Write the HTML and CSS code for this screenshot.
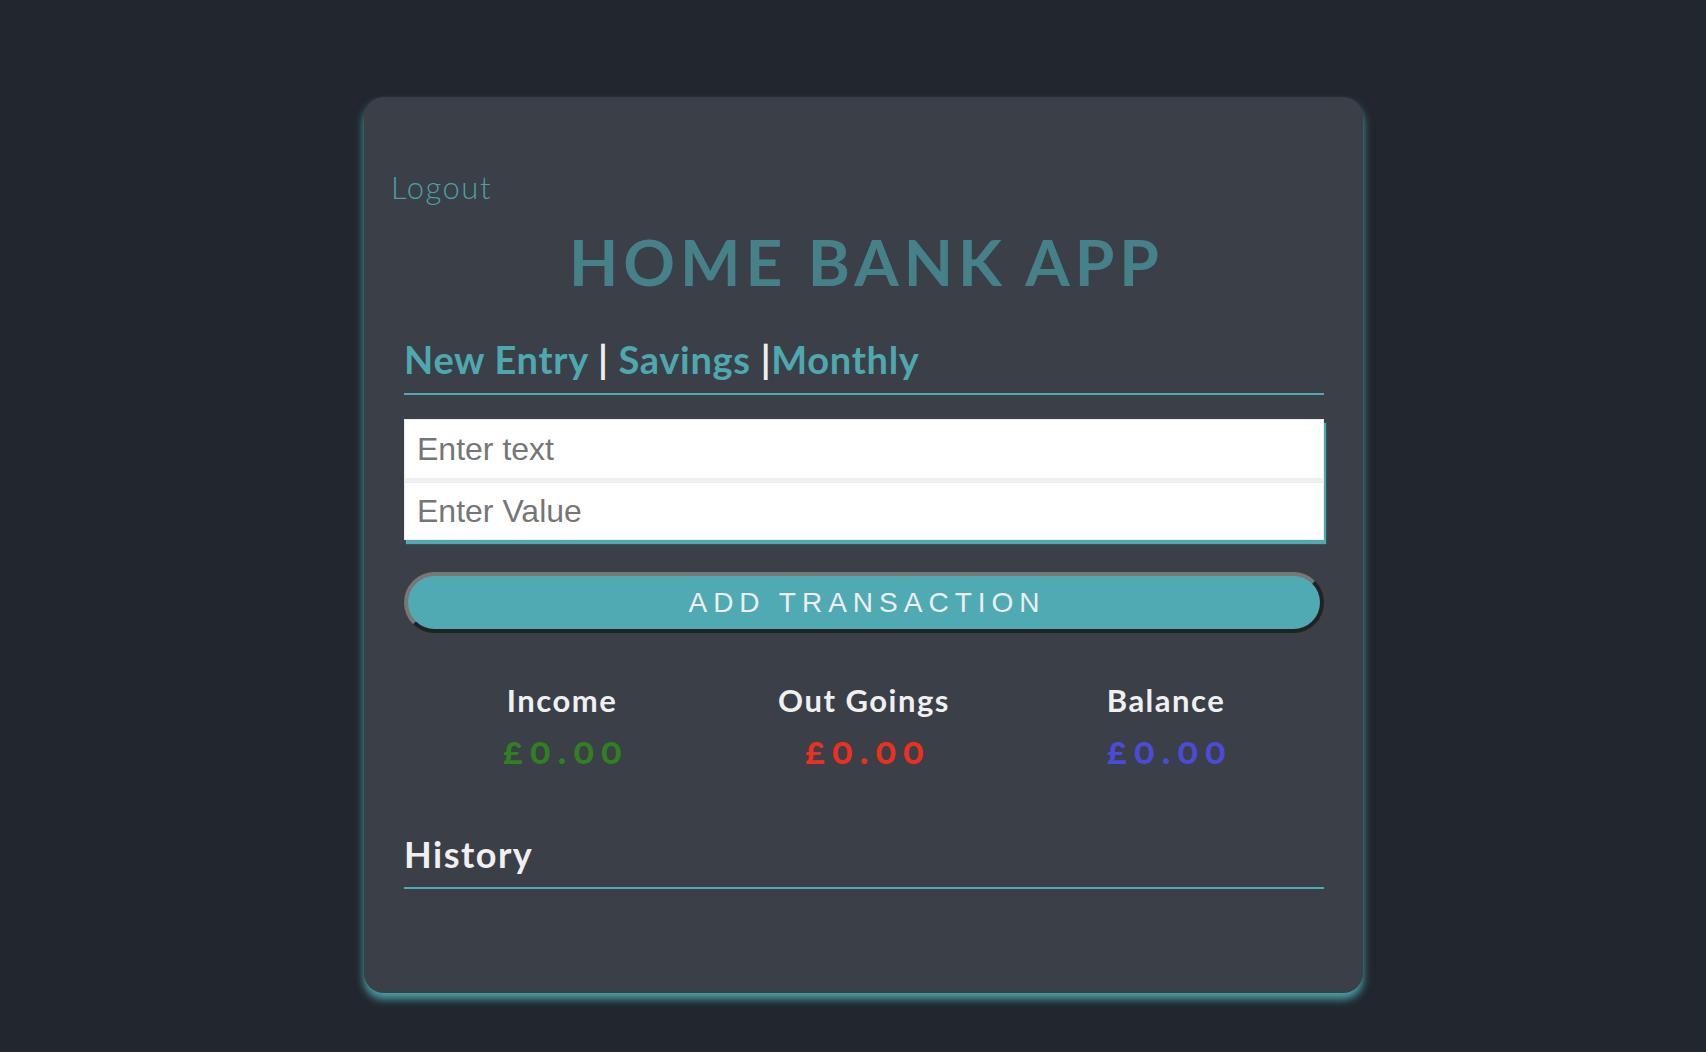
FILE: index.html
```html
<!DOCTYPE html>
<html lang="en">
<head>
<meta charset="utf-8">
<title>Home Bank App</title>
<link rel="stylesheet" href="styles.css">
</head>
<body>
<div class="page">
  <div class="card">
    <a class="logout" href="#">Logout</a>
    <h1 class="title">HOME BANK APP</h1>
    <div class="main">
      <nav class="tabs"><a href="#" class="tab">New Entry</a><span class="sep"> | </span><a href="#" class="tab">Savings</a><span class="sep"> |</span><a href="#" class="tab">Monthly</a></nav>
      <div class="fields">
        <input class="field field-first" type="text" placeholder="Enter text">
        <input class="field" type="text" placeholder="Enter Value">
      </div>
      <button class="add-btn" type="button">ADD TRANSACTION</button>
      <div class="stats">
        <div class="stat">
          <div class="stat-label">Income</div>
          <div class="stat-value income">£0.00</div>
        </div>
        <div class="stat">
          <div class="stat-label">Out Goings</div>
          <div class="stat-value outgoing">£0.00</div>
        </div>
        <div class="stat">
          <div class="stat-label">Balance</div>
          <div class="stat-value balance">£0.00</div>
        </div>
      </div>
      <h2 class="history">History</h2>
      <ul class="history-list"></ul>
    </div>
  </div>
</div>
</body>
</html>
```

FILE: styles.css
```css
* { box-sizing: border-box; }

html, body {
  margin: 0;
  padding: 0;
}

body {
  background: #22262e;
  min-height: 100vh;
  font-family: Lato, "Open Sans", sans-serif;
}

.page {
  display: flex;
  justify-content: center;
  padding: 97px 0 40px 21px;
}

.card {
  width: 999px;
  background: #3b3f47;
  border-radius: 20px;
  padding: 72px 26px 104px 27px;
  box-shadow: 0 6px 9px #4aa3ab;
  display: flex;
  flex-direction: column;
}

.logout {
  display: block;
  font-size: 31px;
  line-height: 36px;
  font-weight: 300;
  letter-spacing: 1.5px;
  color: #4b9fa6;
  text-decoration: none;
  align-self: flex-start;
}

.title {
  margin: 19px 0 0;
  text-align: center;
  font-size: 64px;
  line-height: 76px;
  font-weight: 700;
  letter-spacing: 5px;
  padding-left: 5px;
  color: #46818a;
}

.main {
  margin: 0 13px;
  display: flex;
  flex-direction: column;
}

.tabs {
  margin-top: 36px;
  padding-bottom: 11px;
  border-bottom: 2px solid #4faab3;
  font-size: 38px;
  line-height: 46px;
  font-weight: 700;
  letter-spacing: 0.7px;
  white-space: nowrap;
}

.tab {
  color: #4ea8b0;
  text-decoration: none;
}

.sep {
  color: #eeeeee;
}

.fields {
  margin-top: 24px;
  display: flex;
  flex-direction: column;
  box-shadow: 2px 4px 1px #4fa9b3;
}

.field {
  display: block;
  width: 100%;
  height: 58px;
  border: 1px solid #ececec;
  background: #ffffff;
  padding: 0 12px;
  font-family: "Liberation Sans", Arial, sans-serif;
  font-size: 32px;
  color: #333;
  outline: none;
}

.field-first {
  height: 63px;
  border-bottom: 4px solid #efefef;
}

.field::placeholder {
  color: #767676;
}

.add-btn {
  margin-top: 32px;
  height: 61px;
  width: 100%;
  border-radius: 31px;
  border: 4px solid;
  border-color: #777777 #222222 #222222 #777777;
  background: #4faab3;
  color: #eeeeee;
  font-family: "Liberation Sans", Arial, sans-serif;
  font-size: 28px;
  letter-spacing: 6px;
  padding: 0 0 0 6px;
  cursor: pointer;
}

.stats {
  margin-top: 49px;
  padding: 0 7px;
  display: grid;
  grid-template-columns: 1fr 1fr 1fr;
}

.stat {
  display: flex;
  flex-direction: column;
  align-items: center;
}

.stat-label {
  font-size: 31px;
  line-height: 36px;
  font-weight: 700;
  letter-spacing: 1.5px;
  color: #f0f0f0;
}

.stat-value {
  margin-top: 8px;
  font-size: 38px;
  line-height: 46px;
  font-weight: 700;
  letter-spacing: 7px;
  padding-left: 7px;
  font-variant-numeric: oldstyle-nums;
}

.income { color: #31801f; }
.outgoing { color: #ec3020; }
.balance { color: #4b4bd8; }

.history {
  margin: 60px 0 0;
  padding-bottom: 11px;
  border-bottom: 2px solid #4faab3;
  font-size: 36px;
  line-height: 44px;
  font-weight: 700;
  letter-spacing: 1.5px;
  color: #f0f0f0;
}

.history-list {
  margin: 0;
  padding: 0;
  list-style: none;
}
```
